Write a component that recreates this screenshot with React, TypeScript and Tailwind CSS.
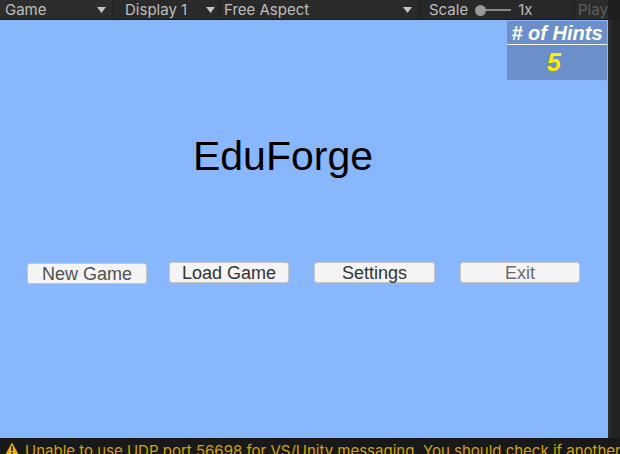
import React from "react";

function Caret() {
  return (
    <svg width="9" height="6" viewBox="0 0 9 6" className="shrink-0">
      <path d="M0 0 H9 L4.5 6 Z" fill="#c4c4c4" />
    </svg>
  );
}

function Warn() {
  return (
    <svg width="14" height="13" viewBox="0 0 14 13" className="shrink-0">
      <path d="M7 0.5 L13.6 12.5 H0.4 Z" fill="#f0b400" />
      <rect x="6.2" y="4" width="1.6" height="5" fill="#191919" />
      <rect x="6.2" y="10" width="1.6" height="1.6" fill="#191919" />
    </svg>
  );
}

export default function App() {
  const ui = { fontFamily: "Inter, 'Noto Sans', sans-serif" };
  const arial = { fontFamily: "'Liberation Sans', Arial, sans-serif" };
  return (
    <div className="w-[620px] h-[454px] overflow-hidden flex flex-col bg-[#191919]">
      {/* toolbar */}
      <div
        className="h-[20px] flex items-stretch bg-[#282828] border-b border-[#1b1b1b] text-[15px] leading-none text-[#bebebe]"
        style={ui}
      >
        <div className="w-[114px] flex items-center justify-between pl-[5px] pr-[7px] bg-[#2d2d2d] border-r border-[#1e1e1e]">
          <span>Game</span>
          <Caret />
        </div>
        <div className="w-[106px] flex items-center justify-between pl-[11px] pr-[4px] bg-[#2a2a2a] border-r border-[#1e1e1e]">
          <span>Display 1</span>
          <Caret />
        </div>
        <div className="w-[200px] flex items-center justify-between pl-[4px] pr-[7px] bg-[#2a2a2a] border-r border-[#1e1e1e]">
          <span>Free Aspect</span>
          <Caret />
        </div>
        <div className="w-[155px] flex items-center pl-[9px] bg-[#282828] border-r border-[#1e1e1e]">
          <span>Scale</span>
          <div className="ml-[7px] relative w-[36px] h-[12px] flex items-center">
            <div className="w-full h-[2px] bg-[#8a8a8a]" />
            <div className="absolute left-0 top-[1px] w-[11px] h-[11px] rounded-full bg-[#999999]" />
          </div>
          <span className="ml-[7px]">1x</span>
        </div>
        <div className="w-[33px] flex items-center pl-[3px] overflow-hidden text-[#5f5f5f] bg-[#2b2b2b]">
          <span>Play</span>
        </div>
        <div className="flex-1 bg-[#1f1f1f]" />
      </div>

      {/* main */}
      <div className="flex-1 flex min-h-0">
        <div className="w-[608px] relative bg-[#88b7fe] flex flex-col items-start" style={arial}>
          <div className="w-full text-center text-[41px] leading-none h-[41px] mt-[116px] pr-[42px] text-black">
            EduForge
          </div>
          <div className="flex items-start mt-[85px] ml-[27px] text-[18px] leading-none">
            <button className="mt-[1px] w-[120px] h-[21px] flex items-center justify-center bg-[#f4f4f4] border border-[#c6c6c6] rounded-[3px] text-[#505050]">
              New Game
            </button>
            <button className="ml-[22px] w-[120px] h-[21px] flex items-center justify-center bg-[#f4f4f4] border border-[#c6c6c6] rounded-[3px] text-[#333333]">
              Load Game
            </button>
            <button className="ml-[25px] w-[121px] h-[21px] flex items-center justify-center bg-[#f4f4f4] border border-[#c6c6c6] rounded-[3px] text-[#333333]">
              Settings
            </button>
            <button className="ml-[25px] w-[120px] h-[21px] flex items-center justify-center bg-[#f4f4f4] border border-[#c6c6c6] rounded-[3px] text-[#6c6c6c]">
              Exit
            </button>
          </div>

          {/* hints overlay */}
          <div className="absolute top-[1px] right-[1px] w-[100px] bg-[#6b8fcb] flex flex-col italic font-bold">
            <div className="h-[24px] flex items-center justify-center text-white text-[20px] leading-none border-b border-white">
              # of Hints
            </div>
            <div className="h-[35px] flex items-center justify-center text-[#ffee00] text-[25px] leading-none pr-[6px]">
              5
            </div>
          </div>
        </div>
        <div className="flex-1 flex">
          <div className="w-[3px] bg-[#2c2c2c]" />
          <div className="flex-1 bg-[#232323]" />
        </div>
      </div>

      {/* status */}
      <div className="h-[16px] shrink-0 bg-[#191919] flex items-start pl-[5px] pt-[4px] overflow-hidden whitespace-nowrap" style={ui}>
        <Warn />
        <span className="ml-[6px] text-[15px] leading-none text-[#d4a500] mt-[1px]">
          Unable to use UDP port 56698 for VS/Unity messaging. You should check if another process is already bound to this port
        </span>
      </div>
    </div>
  );
}
